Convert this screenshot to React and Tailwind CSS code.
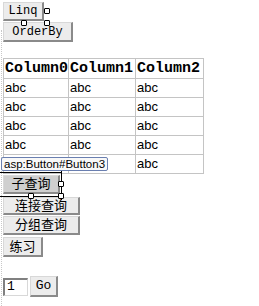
import React from "react";

const mono = { fontFamily: '"Liberation Mono", "DejaVu Sans Mono", monospace' };

function Handle({ x, y }) {
  return (
    <div
      className="absolute w-[6px] h-[6px] bg-white border border-black rounded-[1px]"
      style={{ left: x - 3, top: y - 3 }}
    />
  );
}

const btn =
  "flex items-center justify-center bg-[#ececec] border-t border-l border-r-2 border-b-2 border-t-[#d8d8d8] border-l-[#d8d8d8] border-r-[#8a8a8a] border-b-[#8a8a8a] text-black";

export default function App() {
  const rows = [0, 1, 2, 3, 4];
  return (
    <div className="relative w-[259px] h-[306px] bg-white overflow-hidden font-['Liberation_Sans','Noto_Sans_CJK_SC',sans-serif]">
      {/* designer dotted edge */}
      <div className="absolute left-[1px] top-[30px] bottom-0 border-l border-dotted border-[#c8c8c8]" />

      <div className="flex flex-col items-start pl-[3px] pt-[2px]">
        <button className={`${btn} w-[41px] h-[19px] text-[12px]`} style={mono}>
          Linq
        </button>
        <button className={`${btn} w-[70px] h-[20px] mt-[1px] text-[12px]`} style={mono}>
          OrderBy
        </button>

        <table className="mt-[16px] border-collapse border border-[#a8a8a8] w-[200px] table-fixed">
          <colgroup>
            <col className="w-[65px]" />
            <col className="w-[67px]" />
            <col className="w-[68px]" />
          </colgroup>
          <thead>
            <tr className="h-[20px]">
              {["Column0", "Column1", "Column2"].map((c) => (
                <th
                  key={c}
                  className="border border-[#c4c4c4] p-0 pl-[1px] text-left font-bold text-[15px] leading-[18px] text-black"
                  style={mono}
                >
                  {c}
                </th>
              ))}
            </tr>
          </thead>
          <tbody>
            {rows.map((r) => (
              <tr key={r} className="h-[19px]">
                {[0, 1, 2].map((c) => (
                  <td
                    key={c}
                    className="border border-[#c4c4c4] p-0 pl-[1px] text-[13px] leading-[16px] text-black"
                  >
                    abc
                  </td>
                ))}
              </tr>
            ))}
          </tbody>
        </table>

        <button className={`${btn} w-[57px] h-[19px] mt-[1px] !bg-[#cfcfcf] text-[13px]`}>
          子查询
        </button>
        <button className={`${btn} w-[77px] h-[18px] mt-[3px] text-[13px]`}>
          连接查询
        </button>
        <button className={`${btn} w-[77px] h-[19px] mt-[1px] text-[13px]`}>
          分组查询
        </button>
        <button className={`${btn} w-[40px] h-[20px] mt-[2px] text-[13px]`}>
          练习
        </button>

        <div className="flex items-center mt-[19px] gap-[2px]">
          <div
            className="w-[25px] h-[18px] bg-white border-t-2 border-l-2 border-r border-b border-t-[#808080] border-l-[#808080] border-r-[#d8d8d8] border-b-[#d8d8d8] text-[13px] leading-[14px] pl-[2px] text-black"
            style={mono}
          >
            1
          </div>
          <button className={`${btn} w-[28px] h-[21px] text-[13px]`} style={mono}>
            Go
          </button>
        </div>
      </div>

      {/* selection frame for 子查询 */}
      <div className="absolute left-[61px] top-[160px] w-px h-[40px] bg-black" />
      <div className="absolute left-0 top-[172px] w-[62px] h-px bg-black" />
      <div className="absolute left-0 top-[196px] w-[62px] h-px bg-black" />

      {/* tooltip */}
      <div className="absolute left-[1px] top-[157px] h-[14px] px-[2px] bg-[#f8f8f8] border border-[#6a7fb0] rounded-[2px] text-[11.5px] leading-[12px] text-black whitespace-nowrap">
        asp:Button#Button3
      </div>

      <Handle x={47} y={11} />
      <Handle x={24} y={23} />
      <Handle x={47} y={23} />
      <Handle x={61} y={184} />
      <Handle x={31} y={196} />
      <Handle x={61} y={196} />
    </div>
  );
}
